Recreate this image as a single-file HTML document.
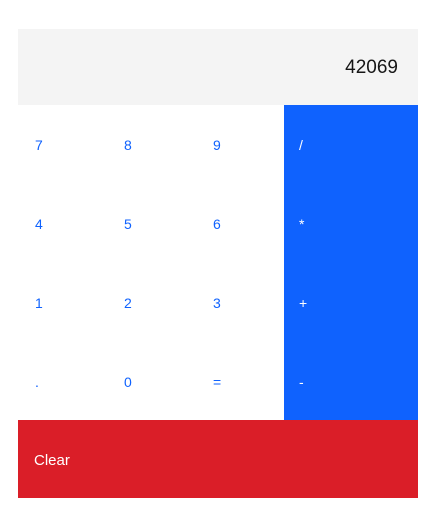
<!DOCTYPE html>
<html><head><style>
*{margin:0;padding:0;box-sizing:border-box}
body{width:440px;height:529px;background:#fff;font-family:"Liberation Sans",sans-serif;position:relative}
.disp{position:absolute;left:18px;top:29px;width:400px;height:76px;background:#f4f4f4;color:#161616;font-size:19px;text-align:right;padding-right:20px;line-height:78px}
.k{position:absolute;height:79px;font-size:14px;color:#0f62fe;padding-left:17px;line-height:80px}
.b{background:#0f62fe;color:#fff;left:284px;width:134px;padding-left:15px}
.clear{position:absolute;left:18px;top:420px;width:400px;height:78px;background:#da1e28;color:#fff;font-size:15px;padding-left:16px;line-height:82px}
</style></head><body>
<div class="disp">42069</div>
<div class="k" style="left:18px;top:105px">7</div>
<div class="k" style="left:107px;top:105px">8</div>
<div class="k" style="left:196px;top:105px">9</div>
<div class="k b" style="top:105px">/</div>
<div class="k" style="left:18px;top:184px">4</div>
<div class="k" style="left:107px;top:184px">5</div>
<div class="k" style="left:196px;top:184px">6</div>
<div class="k b" style="top:184px">*</div>
<div class="k" style="left:18px;top:263px">1</div>
<div class="k" style="left:107px;top:263px">2</div>
<div class="k" style="left:196px;top:263px">3</div>
<div class="k b" style="top:263px">+</div>
<div class="k" style="left:18px;top:342px">.</div>
<div class="k" style="left:107px;top:342px">0</div>
<div class="k" style="left:196px;top:342px">=</div>
<div class="k b" style="top:342px;height:78px">-</div>
<div class="clear">Clear</div>
</body></html>
